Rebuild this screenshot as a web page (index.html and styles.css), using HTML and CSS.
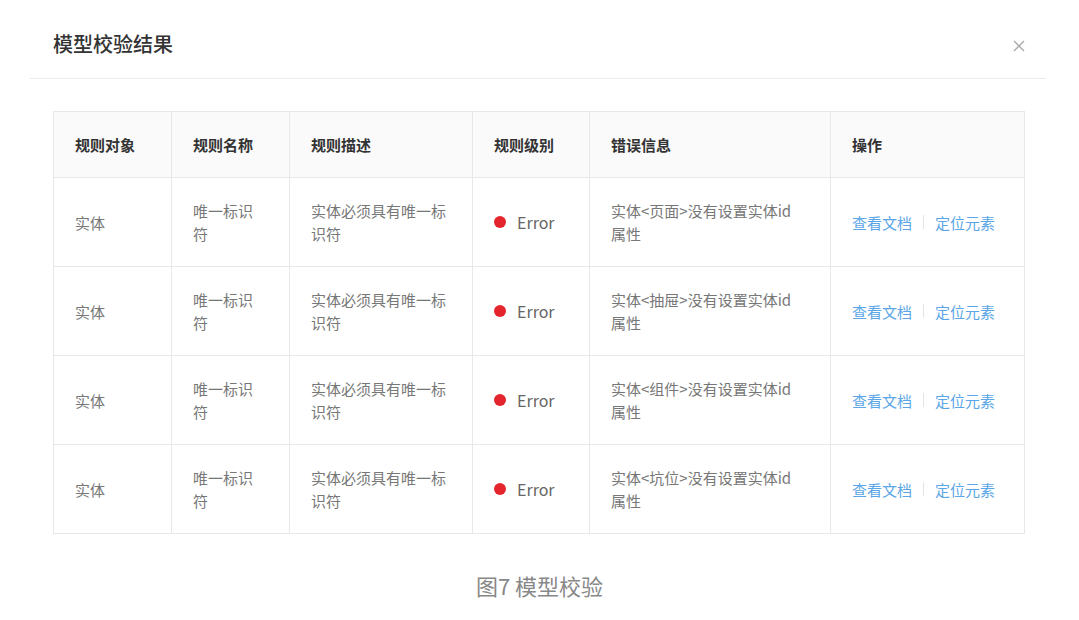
FILE: index.html
```html
<!DOCTYPE html>
<html lang="zh-CN">
<head>
<meta charset="utf-8">
<title>模型校验结果</title>
<link rel="stylesheet" href="styles.css">
</head>
<body>
<div class="modal">
  <div class="modal-header">
    <div class="modal-title">模型校验结果</div>
    <svg class="close" width="12" height="12" viewBox="0 0 12 12"><path d="M1 1L11 11M11 1L1 11" stroke="#a8a8a8" stroke-width="1.3" fill="none"/></svg>
  </div>
  <div class="modal-body">
    <table class="result-table">
      <colgroup>
        <col class="c1"><col class="c2"><col class="c3"><col class="c4"><col class="c5"><col class="c6">
      </colgroup>
      <thead>
        <tr><th>规则对象</th><th>规则名称</th><th>规则描述</th><th>规则级别</th><th>错误信息</th><th>操作</th></tr>
      </thead>
      <tbody>
        <tr><td>实体</td><td>唯一标识符</td><td>实体必须具有唯一标识符</td><td><span class="level"><span class="dot"></span>Error</span></td><td>实体&lt;页面&gt;没有设置实体id<span class="nw">属性</span></td><td><span class="ops"><a class="link">查看文档</a><span class="sep"></span><a class="link">定位元素</a></span></td></tr>
        <tr><td>实体</td><td>唯一标识符</td><td>实体必须具有唯一标识符</td><td><span class="level"><span class="dot"></span>Error</span></td><td>实体&lt;抽屉&gt;没有设置实体id<span class="nw">属性</span></td><td><span class="ops"><a class="link">查看文档</a><span class="sep"></span><a class="link">定位元素</a></span></td></tr>
        <tr><td>实体</td><td>唯一标识符</td><td>实体必须具有唯一标识符</td><td><span class="level"><span class="dot"></span>Error</span></td><td>实体&lt;组件&gt;没有设置实体id<span class="nw">属性</span></td><td><span class="ops"><a class="link">查看文档</a><span class="sep"></span><a class="link">定位元素</a></span></td></tr>
        <tr><td>实体</td><td>唯一标识符</td><td>实体必须具有唯一标识符</td><td><span class="level"><span class="dot"></span>Error</span></td><td>实体&lt;坑位&gt;没有设置实体id<span class="nw">属性</span></td><td><span class="ops"><a class="link">查看文档</a><span class="sep"></span><a class="link">定位元素</a></span></td></tr>
      </tbody>
    </table>
  </div>
</div>
<div class="caption">图7 模型校验</div>
</body>
</html>
```
FILE: styles.css
```css
html, body {
  margin: 0;
  padding: 0;
  background: #fff;
}
body {
  font-family: "Noto Sans CJK SC", "Noto Sans", sans-serif;
  color: #777;
}
.modal {
  margin: 0 33px 0 30px;
}
.modal-header {
  display: flex;
  align-items: center;
  justify-content: space-between;
  padding: 30px 21px 20px 23px;
  border-bottom: 1px solid #ececec;
}
.modal-title {
  font-size: 20px;
  line-height: 28px;
  font-weight: 500;
  color: #333;
}
.close {
  display: block;
  margin-top: 4px;
}
.modal-body {
  padding: 32px 22px 0 23px;
}
.result-table {
  width: 971px;
  table-layout: fixed;
  border-collapse: collapse;
  border: 1px solid #e8e8e8;
  font-size: 15px;
  line-height: 23px;
}
.c1 { width: 118px; }
.c2 { width: 118px; }
.c3 { width: 183px; }
.c4 { width: 117px; }
.c5 { width: 241px; }
.c6 { width: 194px; }
.result-table th,
.result-table td {
  border: 1px solid #e8e8e8;
  padding: 21px 23px 21px 21px;
  text-align: left;
  vertical-align: middle;
}
.result-table th {
  background: #fafafa;
  color: #333;
  font-weight: 600;
}
.result-table td {
  color: #777;
}
.nw {
  white-space: nowrap;
}
.level {
  display: flex;
  align-items: center;
  font-size: 16px;
  color: #666;
}
.dot {
  width: 12px;
  height: 12px;
  border-radius: 50%;
  background: #e5252d;
  margin-right: 11px;
}
.ops {
  display: flex;
  align-items: center;
}
.link {
  color: #5aa6e6;
  cursor: pointer;
}
.sep {
  width: 1px;
  height: 14px;
  background: #e3e3e3;
  margin: 0 11px;
}
.caption {
  margin-top: 36px;
  text-align: center;
  font-size: 22px;
  line-height: 30px;
  color: #888;
}
```
